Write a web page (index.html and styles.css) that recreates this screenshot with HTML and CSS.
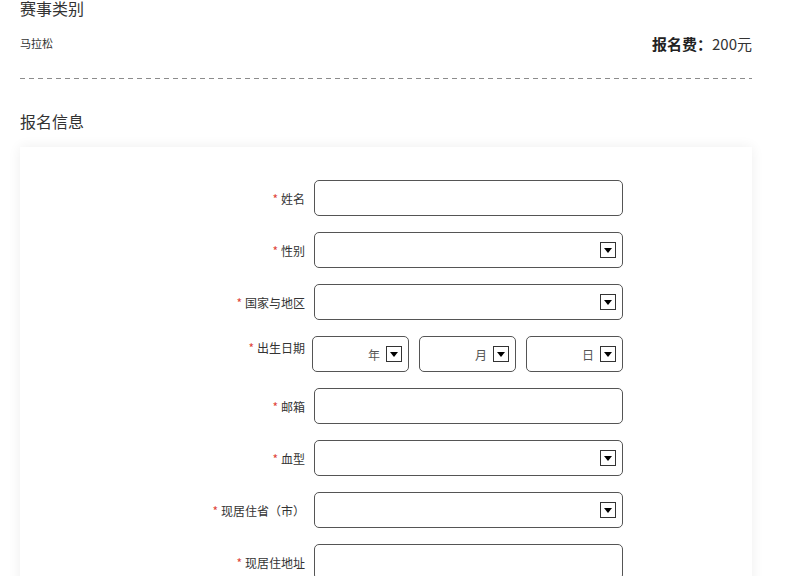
FILE: index.html
```html
<!DOCTYPE html>
<html lang="zh-CN">
<head>
<meta charset="utf-8">
<title>报名信息</title>
<link rel="stylesheet" href="styles.css">
</head>
<body>
<div class="page">
  <h2 class="section-title top">赛事类别</h2>
  <div class="event-row">
    <span class="event-name">马拉松</span>
    <span class="fee"><b>报名费：</b>200元</span>
  </div>
  <div class="dash"></div>
  <h2 class="section-title">报名信息</h2>
  <div class="card">
    <div class="row">
      <label class="label"><span class="req">*</span>姓名</label>
      <div class="field"></div>
    </div>
    <div class="row">
      <label class="label"><span class="req">*</span>性别</label>
      <div class="field select"><svg class="arrow" viewBox="0 0 16 16"><rect x="0.5" y="0.5" width="15" height="15" fill="#fff" stroke="#333"/><path d="M4 6h8l-4 5z" fill="#000"/></svg></div>
    </div>
    <div class="row">
      <label class="label"><span class="req">*</span>国家与地区</label>
      <div class="field select"><svg class="arrow" viewBox="0 0 16 16"><rect x="0.5" y="0.5" width="15" height="15" fill="#fff" stroke="#333"/><path d="M4 6h8l-4 5z" fill="#000"/></svg></div>
    </div>
    <div class="row row-top">
      <label class="label"><span class="req">*</span>出生日期</label>
      <div class="dates">
        <div class="field select date"><span class="unit">年</span><svg class="arrow" viewBox="0 0 16 16"><rect x="0.5" y="0.5" width="15" height="15" fill="#fff" stroke="#333"/><path d="M4 6h8l-4 5z" fill="#000"/></svg></div>
        <div class="field select date"><span class="unit">月</span><svg class="arrow" viewBox="0 0 16 16"><rect x="0.5" y="0.5" width="15" height="15" fill="#fff" stroke="#333"/><path d="M4 6h8l-4 5z" fill="#000"/></svg></div>
        <div class="field select date"><span class="unit">日</span><svg class="arrow" viewBox="0 0 16 16"><rect x="0.5" y="0.5" width="15" height="15" fill="#fff" stroke="#333"/><path d="M4 6h8l-4 5z" fill="#000"/></svg></div>
      </div>
    </div>
    <div class="row">
      <label class="label"><span class="req">*</span>邮箱</label>
      <div class="field"></div>
    </div>
    <div class="row">
      <label class="label"><span class="req">*</span>血型</label>
      <div class="field select"><svg class="arrow" viewBox="0 0 16 16"><rect x="0.5" y="0.5" width="15" height="15" fill="#fff" stroke="#333"/><path d="M4 6h8l-4 5z" fill="#000"/></svg></div>
    </div>
    <div class="row">
      <label class="label"><span class="req">*</span>现居住省（市）</label>
      <div class="field select"><svg class="arrow" viewBox="0 0 16 16"><rect x="0.5" y="0.5" width="15" height="15" fill="#fff" stroke="#333"/><path d="M4 6h8l-4 5z" fill="#000"/></svg></div>
    </div>
    <div class="row">
      <label class="label"><span class="req">*</span>现居住地址</label>
      <div class="field"></div>
    </div>
  </div>
</div>
</body>
</html>
```
FILE: styles.css
```css
* { box-sizing: border-box; }
html, body { margin: 0; padding: 0; background: #fff; }
body {
  font-family: "Microsoft YaHei", "Noto Sans CJK SC", "Noto Sans", sans-serif;
  color: #333;
  overflow: hidden;
}
.page {
  width: 732px;
  margin-left: 20px;
}
.section-title {
  margin: 0;
  font-size: 16px;
  font-weight: normal;
  line-height: 20px;
  color: #333;
}
.section-title.top {
  margin-top: -2px;
}
.event-row {
  display: flex;
  justify-content: space-between;
  align-items: center;
  margin-top: 15px;
  height: 20px;
}
.event-name {
  font-size: 11px;
}
.fee {
  font-size: 15px;
  color: #333;
}
.fee b {
  font-weight: bold;
  color: #222;
}
.dash {
  height: 1px;
  margin-top: 25px;
  background: repeating-linear-gradient(to right, #8c8c8c 0 5px, transparent 5px 9px);
}
.dash + .section-title {
  margin-top: 32px;
}
.card {
  margin-top: 16px;
  background: #fff;
  box-shadow: 0 0 12px rgba(0, 0, 0, 0.07);
  padding: 33px 0 40px;
}
.row {
  display: flex;
  align-items: center;
  height: 36px;
  margin-bottom: 16px;
}
.row-top {
  align-items: flex-start;
}
.row-top .label {
  padding-top: 3px;
}
.label {
  width: 285px;
  text-align: right;
  font-size: 12px;
  color: #333;
}
.req {
  color: #e0453a;
  margin-right: 3px;
}
.field {
  margin-left: 9px;
  width: 309px;
  height: 36px;
  border: 1px solid #555;
  border-radius: 5px;
  background: #fff;
  display: flex;
  align-items: center;
  justify-content: flex-end;
  padding-right: 6px;
}
.arrow {
  width: 16px;
  height: 16px;
  display: block;
}
.dates {
  margin-left: 7px;
  display: flex;
  gap: 10px;
}
.field.date {
  margin-left: 0;
  width: 97px;
}
.unit {
  font-size: 12px;
  color: #555;
  margin-right: 6px;
}
```
